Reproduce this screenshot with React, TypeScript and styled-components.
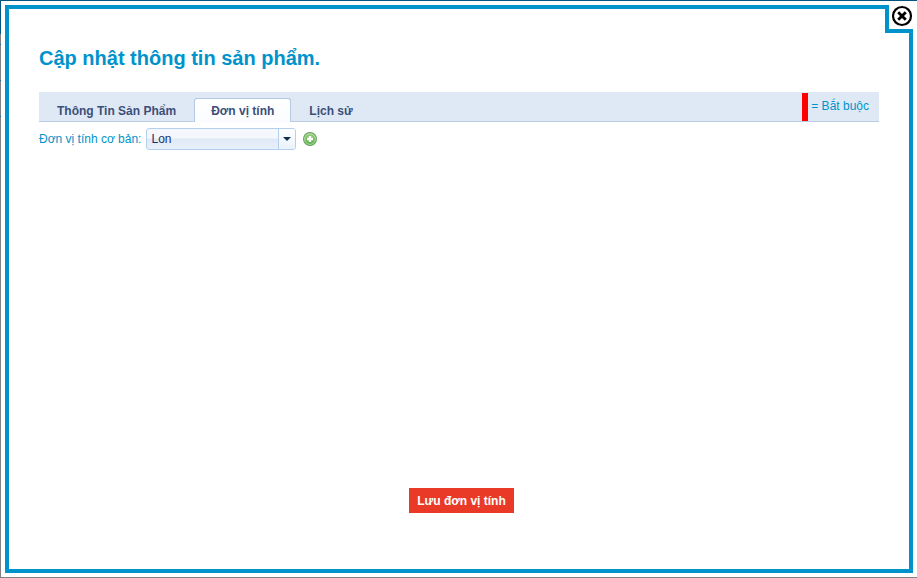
import React, { useState } from 'react';
import styled, { createGlobalStyle } from 'styled-components';

const GlobalStyle = createGlobalStyle`
  * { box-sizing: border-box; }
  body {
    margin: 0;
    font-family: "Liberation Sans", Arial, sans-serif;
    font-size: 12px;
    line-height: 16px;
    color: #0093cb;
  }
`;

const Backdrop = styled.div`
  display: flex;
  min-height: 100vh;
  padding: 1px 0 1px 1px;
  background:
    linear-gradient(#005580, #005580) 0 0 / 100% 1px no-repeat,
    linear-gradient(#005580, #005580) 0 0 / 1px 34px no-repeat,
    linear-gradient(#00708c, #00708c) 0 44px / 1px 1px no-repeat,
    linear-gradient(#00708c, #00708c) 0 80px / 1px 1px no-repeat,
    linear-gradient(#00708c, #00708c) 0 116px / 1px 1px no-repeat,
    #808080;
`;

const Dialog = styled.div`
  position: relative;
  display: flex;
  flex: 1;
  padding: 4px;
  background: #fff;
`;

const Frame = styled.div`
  display: flex;
  flex: 1;
  flex-direction: column;
  min-width: 0;
  padding: 36px 30px 56px;
  border: 4px solid #0093cb;
`;

const CloseButton = styled.button`
  position: absolute;
  top: 0;
  right: 0;
  width: 32px;
  height: 32px;
  padding: 0;
  border: 0;
  background: #fff;
  cursor: pointer;

  &::before {
    content: "";
    position: absolute;
    inset: 4px 4px 0 0;
    border: solid #0093cb;
    border-width: 0 0 4px 4px;
  }

  svg {
    position: absolute;
    top: 4px;
    right: 4px;
  }
`;

const Title = styled.h1`
  margin: 0 0 20px;
  font-size: 20px;
  line-height: 27px;
`;

const TabBar = styled.div`
  display: flex;
  align-items: flex-start;
  justify-content: space-between;
  height: 30px;
  border-bottom: 1px solid #b9cce6;
  background: #dfe9f6;
`;

const TabList = styled.div`
  display: flex;
  gap: 1px;
  padding: 6px 0 0 1px;
`;

const Tab = styled.button<{ $active?: boolean }>`
  height: 24px;
  padding: 1px 16px 0;
  border: 1px solid ${(p) => (p.$active ? '#b3c9e4' : 'transparent')};
  border-bottom: 0;
  border-radius: 3px 3px 0 0;
  background: ${(p) => (p.$active ? 'linear-gradient(#fff, #fafcff)' : 'none')};
  color: #3c4f78;
  font: bold 12px/16px "Liberation Sans", Arial, sans-serif;
  white-space: nowrap;
  cursor: pointer;
`;

const Required = styled.div`
  height: 28px;
  margin: 1px 10px 0 0;
  padding: 5px 0 0 3px;
  border-left: 6px solid #f00;
`;

const UnitRow = styled.div`
  display: flex;
  align-items: center;
  margin-top: 6px;
`;

const UnitLabel = styled.label`
  margin-right: 5px;
  white-space: nowrap;
`;

const SelectBox = styled.div`
  display: grid;
  width: 150px;
  height: 22px;
  border: 1px solid #b5cfee;
  border-radius: 3px;
  background: linear-gradient(#f4f7fc 0 45%, #dfe9f6 50%, #e8f0fa);
  overflow: hidden;

  > * { grid-area: 1 / 1; }
`;

const UnitSelect = styled.select`
  appearance: none;
  width: 100%;
  padding: 0 20px 0 4px;
  border: 0;
  background: transparent;
  color: #1c2f6b;
  font: 12px/20px "Liberation Sans", Arial, sans-serif;
`;

const SelectArrow = styled.span`
  display: grid;
  place-items: center;
  justify-self: end;
  width: 17px;
  padding-right: 1px;
  border-left: 1px solid #b5cfee;
  background: linear-gradient(#fff, #eaf2fc);
  pointer-events: none;
`;

const AddButton = styled.button`
  display: flex;
  margin-left: 7px;
  padding: 0;
  border: 0;
  background: none;
  cursor: pointer;
`;

const Footer = styled.div`
  display: flex;
  justify-content: center;
  margin-top: auto;
  padding-left: 5px;
`;

const SaveButton = styled.button`
  height: 25px;
  padding: 0 8px;
  border: 0;
  background: #e93a27;
  color: #fff;
  font: bold 12px/16px "Liberation Sans", Arial, sans-serif;
  cursor: pointer;
`;

const tabs = ['Thông Tin Sản Phẩm', 'Đơn vị tính', 'Lịch sử'];

export default function App() {
  const [active, setActive] = useState(1);
  return (
    <>
      <GlobalStyle />
      <Backdrop>
        <Dialog role="dialog" aria-labelledby="dialog-title">
          <Frame>
            <Title id="dialog-title">Cập nhật thông tin sản phẩm.</Title>
            <TabBar>
              <TabList role="tablist">
                {tabs.map((name, i) => (
                  <Tab
                    key={name}
                    type="button"
                    role="tab"
                    aria-selected={i === active}
                    $active={i === active}
                    onClick={() => setActive(i)}
                  >
                    {name}
                  </Tab>
                ))}
              </TabList>
              <Required>= Bắt buộc</Required>
            </TabBar>
            <UnitRow>
              <UnitLabel htmlFor="unit">Đơn vị tính cơ bản:</UnitLabel>
              <SelectBox>
                <UnitSelect id="unit" defaultValue="Lon">
                  <option>Lon</option>
                </UnitSelect>
                <SelectArrow>
                  <svg width="8" height="4" viewBox="0 0 8 4">
                    <path d="M0 0H8L4 4Z" fill="#0f3052" />
                  </svg>
                </SelectArrow>
              </SelectBox>
              <AddButton type="button" aria-label="Thêm">
                <svg width="14" height="14" viewBox="0 0 14 14">
                  <defs>
                    <linearGradient id="add-fill" x1="0" y1="0" x2="0" y2="1">
                      <stop offset="0" stopColor="#a3cf8e" />
                      <stop offset="1" stopColor="#4fae3c" />
                    </linearGradient>
                  </defs>
                  <circle cx="7" cy="7" r="6.4" fill="url(#add-fill)" stroke="#5f9f50" strokeWidth="1.1" />
                  <circle cx="7" cy="7" r="5.4" fill="none" stroke="#c4e2b8" strokeWidth="0.8" />
                  <path d="M7 4V10M4 7H10" stroke="#fff" strokeWidth="2.4" />
                </svg>
              </AddButton>
            </UnitRow>
            <Footer>
              <SaveButton type="button">Lưu đơn vị tính</SaveButton>
            </Footer>
          </Frame>
          <CloseButton type="button" aria-label="Đóng">
            <svg width="22" height="22" viewBox="0 0 22 22">
              <circle cx="11" cy="11" r="9" fill="#fff" stroke="#000" strokeWidth="2.2" />
              <path d="M8.2 8.2L13.8 13.8M13.8 8.2L8.2 13.8" stroke="#000" strokeWidth="2.8" strokeLinecap="square" />
            </svg>
          </CloseButton>
        </Dialog>
      </Backdrop>
    </>
  );
}
